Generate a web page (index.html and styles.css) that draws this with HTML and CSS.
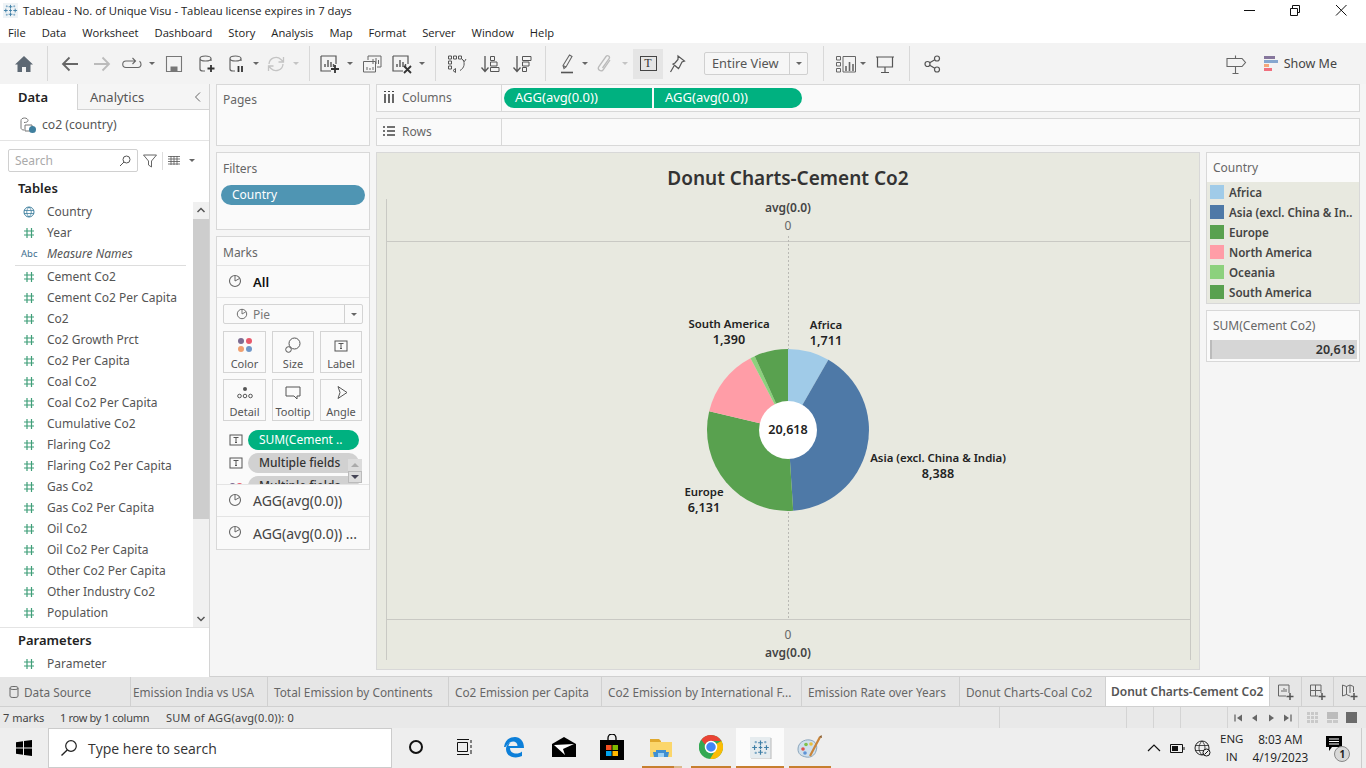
FILE: index.html
```html
<!DOCTYPE html>
<html>
<head>
  <title>Tableau - No. of Unique Visu</title>
  <link rel="stylesheet" href="styles.css">
</head>
<body>
  <svg class="sprite">
    <symbol id="hash" viewBox="0 0 12 12"><path d="M4 1v10M8.500 1v10M1 4h10M1 8h10" stroke="#3f9e78" stroke-width="1.200" fill="none"/></symbol>
    <symbol id="pie" viewBox="0 0 14 14"><circle cx="7" cy="7" r="5.500" fill="none" stroke="#666" stroke-width="1.100"/><path d="M7 7V1.500M7 7l4.500 -2.500" stroke="#666" fill="none"/></symbol>
    <symbol id="tbox" viewBox="0 0 14 14"><rect x="1" y="2" width="12" height="10" fill="none" stroke="#555"/><path d="M4.500 4.500h5M7 4.500v5M6 9.500h2" stroke="#555" fill="none"/></symbol>
    <symbol id="tableau" viewBox="0 0 16 16"><g stroke="#3f7fa6" fill="none"><path d="M8 2v4M6 4h4M8 10v4M6 12h4M3 6v4M1 8h4M13 6v4M11 8h4M8 6.500v3M6.500 8h3" /><path d="M4 2.500v2M3 3.500h2M12 2.500v2M11 3.500h2M4 11.500v2M3 12.500h2M12 11.500v2M11 12.500h2" stroke="#7ba7c4"/></g></symbol>
    <symbol id="db" viewBox="0 0 24 24"><path d="M17 9V6.500C17 5 14.500 4 11.500 4S6 5 6 6.500V17c0 1 1 2 3 2h2M6 6.500C6 8 8.500 9 11.500 9S17 8 17 6.500" fill="none" stroke="#666" stroke-width="1.200"/></symbol>
    <symbol id="sheet" viewBox="0 0 24 24"><path d="M3 4h15v8M13 19H3V4" fill="none" stroke="#555" stroke-width="1.200"/><path d="M7 15v-3M10 15V8M13 15v-5M15.500 15v-3" stroke="#555" stroke-width="1.400"/></symbol>
  </svg>

  <div class="titlebar">
    <svg class="app-logo"><use href="#tableau"/></svg>
    <span class="title-text">Tableau - No. of Unique Visu - Tableau license expires in 7 days</span>
    <div class="win-btns">
      <svg width="46" height="21"><path d="M18 10.500h11" stroke="#111"/></svg>
      <svg width="46" height="21"><path d="M18.500 8.500h7v7h-7zM20.500 8V5.500h7v7H26" stroke="#111" fill="none"/></svg>
      <svg width="46" height="21"><path d="M18 5l10.500 10.500M28.500 5L18 15.500" stroke="#111" fill="none"/></svg>
    </div>
  </div>

  <nav class="menubar">
    <span>File</span><span>Data</span><span>Worksheet</span><span>Dashboard</span><span>Story</span><span>Analysis</span><span>Map</span><span>Format</span><span>Server</span><span>Window</span><span>Help</span>
  </nav>

  <div class="toolbar">
    <div class="tools">
      <svg viewBox="0 0 24 24"><path d="M12 4l9 8.500h-2.500V20H14v-5h-4v5H5.500v-7.500H3z" fill="#5d6873"/></svg>
      <i class="sep"></i>
      <svg viewBox="0 0 24 24"><path d="M20 12H5M11.500 5.500L5 12l6.500 6.500" fill="none" stroke="#666" stroke-width="1.800"/></svg>
      <svg viewBox="0 0 24 24"><path d="M4 12h15M12.500 5.500L19 12l-6.500 6.500" fill="none" stroke="#bbb" stroke-width="1.800"/></svg>
      <svg viewBox="0 0 24 24"><path d="M15 9H6a3 3 0 0 0 0 6.500h12a3 3 0 0 0 3-3.200c0-1.300-.5-2.300-1.500-3M12.500 6l3 3-3 3" fill="none" stroke="#666" stroke-width="1.100"/></svg>
      <b class="caret"></b>
      <svg viewBox="0 0 24 24"><path d="M4.500 4.500h15v15h-15z" fill="none" stroke="#777" stroke-width="1.100"/><path d="M8.500 19.500v-5h7v5zM11 17h3v2.500h-3z" fill="#777"/></svg>
      <svg viewBox="0 0 24 24"><use href="#db"/><path d="M17 13v7M13.500 16.500h7" stroke="#333" stroke-width="1.800"/></svg>
      <svg viewBox="0 0 24 24"><use href="#db"/><path d="M14.500 14v6M18 14v6" stroke="#333" stroke-width="1.800"/></svg>
      <b class="caret"></b>
      <svg viewBox="0 0 24 24"><path d="M5 12a7 7 0 0 1 12-4.500l2 2M19 12a7 7 0 0 1-12 4.500l-2-2M19.500 5v5h-5M4.500 19v-5h5" fill="none" stroke="#c4c4c4" stroke-width="1.300"/></svg>
      <b class="caret off"></b>
      <i class="sep"></i>
      <svg viewBox="0 0 24 24"><use href="#sheet"/><path d="M17 13v8M13 17h8" stroke="#333" stroke-width="1.800"/></svg>
      <b class="caret"></b>
      <svg viewBox="0 0 24 24"><path d="M8 8V4h13v11h-4" fill="none" stroke="#666"/><path d="M3.500 9.500h12V20h-12z" fill="#f4f4f4" stroke="#666"/><path d="M13 7v5M16 6v6M18.500 8v4M7 18v-3M10 18v-2M13 18v-3" stroke="#666"/></svg>
      <svg viewBox="0 0 24 24"><use href="#sheet"/><path d="M14 14l7 7M21 14l-7 7" stroke="#333" stroke-width="1.800"/></svg>
      <b class="caret"></b>
      <i class="sep"></i>
      <svg viewBox="0 0 24 24"><path d="M3.500 4h3v3h-3zM8.500 4h3v3h-3zM13.500 4h3v3h-3zM3.500 9h3v3h-3zM3.500 14h3v3h-3zM18 8c2 3 1.500 8-3 10.500M8 18.500l2.500-2v4zM17 7l2.500 2.500L21 7" fill="none" stroke="#555"/></svg>
      <svg viewBox="0 0 24 24"><path d="M7 4v15M3.500 15.500L7 19.500l3.500-4" fill="none" stroke="#555" stroke-width="1.300"/><path d="M12.500 4.500h4v4h-4zM12.500 10h6.500v4h-6.500zM12.500 15.500H21v4h-8.500z" fill="none" stroke="#555"/></svg>
      <svg viewBox="0 0 24 24"><path d="M7 4v15M3.500 15.500L7 19.500l3.500-4" fill="none" stroke="#555" stroke-width="1.300"/><path d="M12.500 4.500H21v4h-8.500zM12.500 10H19v4h-6.500zM12.500 15.500h4v4h-4z" fill="none" stroke="#555"/></svg>
      <i class="sep"></i>
      <svg viewBox="0 0 24 24"><path d="M9 16.500l-1 -3L14.500 3l2.500 1.500L11 15zM8 13.500l3 1.500" fill="none" stroke="#666" stroke-width="1.100"/><path d="M6 20.500h12" stroke="#555" stroke-width="1.600"/></svg>
      <b class="caret"></b>
      <svg viewBox="0 0 24 24"><path d="M17 8l-7 10a2.700 2.700 0 0 1-4.300-3.200L13 4.500a1.900 1.900 0 0 1 3.100 2.200L9.500 16" fill="none" stroke="#bbb" stroke-width="1.300"/></svg>
      <b class="caret off"></b>
      <span class="tool-on"><span class="t-box">T</span></span>
      <svg viewBox="0 0 24 24"><path d="M13 4l6.500 5-2.500 1-2.500 5-1 1.500-5.500-4.500 2-1 3-3.500zM9 14l-3.500 6" fill="none" stroke="#555" stroke-width="1.200"/></svg>
      <span></span>
      <div class="fit-select"><span class="fit-label">Entire View</span><span class="fit-arrow"><b class="caret"></b></span></div>
      <i class="sep"></i>
      <svg viewBox="0 0 24 24"><path d="M2.500 4.500h4v3.500h-4zM2.500 10.500h4v3.500h-4zM2.500 16.500h4V20h-4zM9 4.500h12.500V20H9z" fill="none" stroke="#666"/><path d="M12 19v-5M15.500 19v-9M19 19v-7" stroke="#666" stroke-width="1.600"/></svg>
      <b class="caret"></b>
      <svg viewBox="0 0 24 24"><path d="M3 5h18M4.500 5v10h15V5M12 15v5M8 20.500h8" fill="none" stroke="#555" stroke-width="1.200"/></svg>
      <i class="sep"></i>
      <svg viewBox="0 0 24 24"><circle cx="17" cy="6.500" r="2.500" fill="none" stroke="#555" stroke-width="1.200"/><circle cx="17" cy="17.500" r="2.500" fill="none" stroke="#555" stroke-width="1.200"/><circle cx="7.500" cy="12" r="2.500" fill="none" stroke="#555" stroke-width="1.200"/><path d="M9.700 10.800l5.100-3M9.700 13.200l5.100 3" stroke="#555" stroke-width="1.200"/></svg>
    </div>
    <div class="tools-right">
      <svg viewBox="0 0 24 24"><path d="M3 6.500h15l3.500 4-3.500 4H3zM11.500 3.500v3M11.500 14.500v7M8.500 21.500h6" fill="none" stroke="#666" stroke-width="1.100"/></svg>
      <div class="showme"><span class="showme-bars"><i></i><i></i><i></i><i></i></span>Show Me</div>
    </div>
  </div>

  <div class="workspace">
    <aside class="side">
      <div class="side-tabs">
        <div class="side-tab active">Data</div>
        <div class="side-tab">Analytics<svg width="10" height="12"><path d="M7 1.500L2.500 6 7 10.500" fill="none" stroke="#666"/></svg></div>
      </div>
      <div class="source">
        <svg width="18" height="18" viewBox="0 0 18 18"><path d="M9 4.500c0-1.400-1.500-2.500-3.500-2.500S2 3.100 2 4.500V12c0 1 1 2 3 2M5 6.500c2 0 4-.5 4-2M6 9h7v6H6z" fill="none" stroke="#777"/><circle cx="13.500" cy="13.500" r="3.500" fill="#3f7f9e"/></svg>
        <span>co2 (country)</span>
      </div>
      <div class="search-row">
        <div class="search-box"><span>Search</span><svg width="12" height="12"><circle cx="7.500" cy="4.500" r="3.500" fill="none" stroke="#555"/><path d="M5 7l-4 4" stroke="#555"/></svg></div>
        <svg width="14" height="14"><path d="M.5 1h13L8.500 7v6l-3-2V7z" fill="none" stroke="#666"/></svg>
        <i class="vline"></i>
        <svg width="12" height="10"><path d="M0 .5h12M0 3h12M0 5.500h12M0 8h12M3 0v9M6 0v9M9 0v9" stroke="#555" stroke-width=".8"/></svg>
        <b class="caret"></b>
      </div>
      <h3 class="side-head">Tables</h3>
      <div class="fields-wrap">
        <div class="fields">
          <div class="field"><svg class="f-icon" viewBox="0 0 12 12"><circle cx="6" cy="6" r="5" fill="none" stroke="#3f7f9e"/><path d="M1 4.500h10M1 7.500h10M6 1c-3 3-3 7 0 10M6 1c3 3 3 7 0 10" fill="none" stroke="#3f7f9e" stroke-width=".8"/></svg>Country</div>
          <div class="field"><svg class="f-icon"><use href="#hash"/></svg>Year</div>
          <div class="field measure"><span class="abc">Abc</span>Measure Names</div>
          <hr class="field-rule">
          <div class="field"><svg class="f-icon"><use href="#hash"/></svg>Cement Co2</div>
          <div class="field"><svg class="f-icon"><use href="#hash"/></svg>Cement Co2 Per Capita</div>
          <div class="field"><svg class="f-icon"><use href="#hash"/></svg>Co2</div>
          <div class="field"><svg class="f-icon"><use href="#hash"/></svg>Co2 Growth Prct</div>
          <div class="field"><svg class="f-icon"><use href="#hash"/></svg>Co2 Per Capita</div>
          <div class="field"><svg class="f-icon"><use href="#hash"/></svg>Coal Co2</div>
          <div class="field"><svg class="f-icon"><use href="#hash"/></svg>Coal Co2 Per Capita</div>
          <div class="field"><svg class="f-icon"><use href="#hash"/></svg>Cumulative Co2</div>
          <div class="field"><svg class="f-icon"><use href="#hash"/></svg>Flaring Co2</div>
          <div class="field"><svg class="f-icon"><use href="#hash"/></svg>Flaring Co2 Per Capita</div>
          <div class="field"><svg class="f-icon"><use href="#hash"/></svg>Gas Co2</div>
          <div class="field"><svg class="f-icon"><use href="#hash"/></svg>Gas Co2 Per Capita</div>
          <div class="field"><svg class="f-icon"><use href="#hash"/></svg>Oil Co2</div>
          <div class="field"><svg class="f-icon"><use href="#hash"/></svg>Oil Co2 Per Capita</div>
          <div class="field"><svg class="f-icon"><use href="#hash"/></svg>Other Co2 Per Capita</div>
          <div class="field"><svg class="f-icon"><use href="#hash"/></svg>Other Industry Co2</div>
          <div class="field"><svg class="f-icon"><use href="#hash"/></svg>Population</div>
        </div>
        <div class="scroll">
          <svg width="16" height="17"><path d="M4.500 10L8 6.500l3.500 3.500" fill="none" stroke="#555" stroke-width="1.500"/></svg>
          <div class="scroll-track"><div class="scroll-thumb"></div></div>
          <svg width="16" height="17"><path d="M4.500 7L8 10.500 11.500 7" fill="none" stroke="#555" stroke-width="1.500"/></svg>
        </div>
      </div>
      <div class="params">
        <h3 class="side-head">Parameters</h3>
        <div class="field"><svg class="f-icon"><use href="#hash"/></svg>Parameter</div>
      </div>
    </aside>

    <div class="cards">
      <section class="card pages"><div class="card-title">Pages</div></section>
      <section class="card filters">
        <div class="card-title">Filters</div>
        <div class="filter-pill">Country</div>
      </section>
      <section class="card marks">
        <div class="card-title marks-title">Marks</div>
        <div class="mark-row all"><svg class="m-icon"><use href="#pie"/></svg>All</div>
        <div class="marks-body">
          <div class="mark-select"><svg class="s-icon"><use href="#pie"/></svg><span class="mark-type">Pie</span><span class="fit-arrow"><b class="caret"></b></span></div>
          <div class="mark-btns">
            <div class="mark-btn"><svg width="16" height="16"><circle cx="4" cy="4" r="3" fill="#7d6b91"/><circle cx="12" cy="4" r="3" fill="#e8596b"/><circle cx="4" cy="12" r="3" fill="#f0a070"/><circle cx="12" cy="12" r="3" fill="#6f97c9"/></svg>Color</div>
            <div class="mark-btn"><svg width="16" height="16"><circle cx="9.500" cy="6.500" r="5.500" fill="#fafafa" stroke="#555"/><circle cx="3.500" cy="12.500" r="2.800" fill="#fafafa" stroke="#555"/></svg>Size</div>
            <div class="mark-btn"><svg width="14" height="14"><use href="#tbox"/></svg>Label</div>
            <div class="mark-btn"><svg width="16" height="16"><circle cx="8" cy="4" r="2" fill="#555"/><circle cx="2.500" cy="11" r="1.800" fill="none" stroke="#555"/><circle cx="8" cy="11" r="1.800" fill="none" stroke="#555"/><circle cx="13.500" cy="11" r="1.800" fill="none" stroke="#555"/></svg>Detail</div>
            <div class="mark-btn"><svg width="16" height="16"><path d="M1 2h14v9h-3v3l-3-3H1z" fill="none" stroke="#555"/></svg>Tooltip</div>
            <div class="mark-btn"><svg width="16" height="16"><path d="M5 1.500l9 6-9 6 2-6z" fill="none" stroke="#555"/></svg>Angle</div>
          </div>
          <div class="encodings">
            <div class="enc"><svg class="e-icon"><use href="#tbox"/></svg><span class="pill green">SUM(Cement ..</span></div>
            <div class="enc"><svg class="e-icon"><use href="#tbox"/></svg><span class="pill grey">Multiple fields</span></div>
            <div class="enc"><svg class="e-icon" viewBox="0 0 14 14"><circle cx="3.500" cy="7" r="3" fill="#7d6b91"/><circle cx="10.500" cy="7" r="3" fill="#e8596b"/></svg><span class="pill grey">Multiple fields</span></div>
            <div class="enc-scroll">
              <span class="enc-up"><svg width="14" height="12"><path d="M3 8l4-4 4 4z" fill="#aaa"/></svg></span>
              <span class="enc-down"><svg width="12" height="10"><path d="M2 3l4 4 4-4z" fill="#445"/></svg></span>
            </div>
          </div>
        </div>
        <div class="mark-row agg"><svg class="m-icon"><use href="#pie"/></svg>AGG(avg(0.0))</div>
        <div class="mark-row agg"><svg class="m-icon"><use href="#pie"/></svg>AGG(avg(0.0)) ...</div>
      </section>
    </div>

    <div class="stage">
      <div class="shelf">
        <div class="shelf-label"><svg width="12" height="12"><path d="M2 3v9M6 3v9M10 3v9" stroke="#444" stroke-width="1.600"/><path d="M1 .5h2M5 .5h2M9 .5h2" stroke="#444"/></svg>Columns</div>
        <div class="shelf-pills"><span class="shelf-pill first">AGG(avg(0.0))</span><span class="shelf-pill last">AGG(avg(0.0))</span></div>
      </div>
      <div class="shelf">
        <div class="shelf-label"><svg width="12" height="12"><path d="M0 2h2M4 2h8M0 6h2M4 6h8M0 10h2M4 10h8" stroke="#444" stroke-width="1.400"/></svg>Rows</div>
        <div class="shelf-pills"></div>
      </div>
      <div class="view-row">
        <div class="viz">
          <h2 class="viz-title">Donut Charts-Cement Co2</h2>
          <svg class="chart" width="822" height="472" viewBox="377 197 822 472">
            <path d="M386.500 199V660M1190.500 199V660M387 241.500H1190M387 619.500H1190" stroke="#c9c9c4" fill="none"/>
            <path d="M788.500 236V619" stroke="#b9b9b4" stroke-dasharray="2 2" fill="none"/>
            <text class="axis-name" x="788" y="212">avg(0.0)</text>
            <text class="axis-tick" x="788" y="230">0</text>
            <text class="axis-tick" x="788" y="639">0</text>
            <text class="axis-name" x="788" y="657">avg(0.0)</text>
            <g transform="translate(788 430)">
              <path d="M0 0V-81A81 81 0 0 1 40.340 -70.240Z" fill="#a0cbe8"/>
              <path d="M0 0L40.340 -70.240A81 81 0 0 1 5.180 80.830Z" fill="#4e79a7"/>
              <path d="M0 0L5.180 80.830A81 81 0 0 1 -78.810 -18.740Z" fill="#59a14f"/>
              <path d="M0 0L-78.810 -18.740A81 81 0 0 1 -37.530 -71.780Z" fill="#ff9da7"/>
              <path d="M0 0L-37.530 -71.780A81 81 0 0 1 -33.300 -73.840Z" fill="#8cd17d"/>
              <path d="M0 0L-33.300 -73.840A81 81 0 0 1 0 -81Z" fill="#59a14f"/>
              <circle r="29" fill="#fff"/>
            </g>
            <text class="mark-value" x="788" y="434">20,618</text>
            <text class="mark-label" x="729" y="328">South America</text>
            <text class="mark-value" x="729" y="344">1,390</text>
            <text class="mark-label" x="826" y="329">Africa</text>
            <text class="mark-value" x="826" y="345">1,711</text>
            <text class="mark-label" x="938" y="462">Asia (excl. China &amp; India)</text>
            <text class="mark-value" x="938" y="478">8,388</text>
            <text class="mark-label" x="704" y="496">Europe</text>
            <text class="mark-value" x="704" y="512">6,131</text>
          </svg>
        </div>
        <div class="legends">
          <section class="legend">
            <div class="legend-title">Country</div>
            <ul class="legend-list">
              <li><i class="swatch africa"></i>Africa</li>
              <li><i class="swatch asia"></i>Asia (excl. China &amp; In..</li>
              <li><i class="swatch europe"></i>Europe</li>
              <li><i class="swatch namerica"></i>North America</li>
              <li><i class="swatch oceania"></i>Oceania</li>
              <li><i class="swatch europe"></i>South America</li>
            </ul>
          </section>
          <section class="legend">
            <div class="legend-title">SUM(Cement Co2)</div>
            <div class="size-bar">20,618</div>
          </section>
        </div>
      </div>
    </div>
  </div>

  <div class="sheet-tabs">
    <div class="sheet-tab source-tab"><svg width="12" height="14" viewBox="0 0 12 14"><path d="M2 3v8c0 1 1 1.500 4 1.500s4-.5 4-1.500V3c0-1-1-1.500-4-1.500S2 2 2 3c0 1 1 1.500 4 1.500S10 4 10 3" fill="none" stroke="#666"/></svg>Data Source</div>
    <div class="sheet-tab tight">Emission India vs USA</div>
    <div class="sheet-tab">Total Emission by Continents</div>
    <div class="sheet-tab">Co2 Emission per Capita</div>
    <div class="sheet-tab">Co2 Emission by International F...</div>
    <div class="sheet-tab">Emission Rate over Years</div>
    <div class="sheet-tab">Donut Charts-Coal Co2</div>
    <div class="sheet-tab current">Donut Charts-Cement Co2</div>
    <div class="sheet-tab add"><svg width="18" height="18"><path d="M9 13H1.500V2H12v8" fill="none" stroke="#666"/><path d="M5 9V7M7 9V5M9 9V6" stroke="#666"/><path d="M13 10v7M9.500 13.500h7" stroke="#555" stroke-width="1.500"/></svg></div>
    <div class="sheet-tab add"><svg width="18" height="18"><path d="M9 13H1.500V2H12v8M1.500 7.500H12M6.500 2v11" fill="none" stroke="#666"/><path d="M13 10v7M9.500 13.500h7" stroke="#555" stroke-width="1.500"/></svg></div>
    <div class="sheet-tab add"><svg width="18" height="18"><path d="M9 13l-3.500-1.500L1.500 13V2l4 1.500L9 2l3.500 1.500V9M5.500 3.500v8M9 2v8" fill="none" stroke="#666"/><path d="M13 10v7M9.500 13.500h7" stroke="#555" stroke-width="1.500"/></svg></div>
  </div>

  <div class="statusbar">
    <span class="st-marks">7 marks</span>
    <span class="st-rows">1 row by 1 column</span>
    <span class="st-sum">SUM of AGG(avg(0.0)): 0</span>
    <div class="st-cells"><i></i><i></i><i></i><i></i></div>
    <div class="st-nav">
      <svg width="13" height="10"><path d="M3 1.500v7" stroke="#666" stroke-width="1.300"/><path d="M10 1.500L5 5l5 3.500z" fill="#666"/></svg>
      <svg width="13" height="10"><path d="M9 1.500L4 5l5 3.500z" fill="#666"/></svg>
      <svg width="13" height="10"><path d="M4 1.500L9 5 4 8.500z" fill="#666"/></svg>
      <svg width="13" height="10"><path d="M10 1.500v7" stroke="#666" stroke-width="1.300"/><path d="M3 1.500L8 5 3 8.500z" fill="#666"/></svg>
    </div>
    <div class="st-views">
      <svg width="12" height="11"><path d="M0 0h3v3H0zM4 0h3v3H4zM8 0h3v3H8zM0 4h3v3H0zM4 4h3v3H4zM8 4h3v3H8zM0 8h3v3H0zM4 8h3v3H4zM8 8h3v3H8z" fill="#c9c9c9"/></svg>
      <svg width="12" height="11"><path d="M0 0h11v7H0z" fill="#bcbcbc"/><path d="M0 8h5v3H0zM6 8h5v3H6z" fill="#c9c9c9"/></svg>
      <svg width="12" height="11"><path d="M0 0h11v11H0z" fill="#6b6b6b"/></svg>
    </div>
  </div>

  <footer class="taskbar">
    <svg class="win-logo" width="16" height="16"><path d="M0 2.200L7 1.200V7.500H0zM8 1L16 0v7.500H8zM0 8.500h7v6.300L0 13.800zM8 8.500h8V16l-8-1.100z" fill="#000"/></svg>
    <div class="task-search">
      <svg width="18" height="18"><circle cx="11" cy="7" r="5.300" fill="none" stroke="#222" stroke-width="1.200"/><path d="M7.200 11L1.500 16.500" stroke="#222" stroke-width="1.400"/></svg>
      <span>Type here to search</span>
    </div>
    <div class="task-apps">
      <span class="app"><svg width="16" height="16"><circle cx="8" cy="8" r="6" fill="none" stroke="#111" stroke-width="2"/></svg></span>
      <span class="app"><svg width="18" height="16"><path d="M2 .5h12M2 15.500h12M2.500 3.500h10v9h-10zM16 1v3M16 6v3M16 11v4" fill="none" stroke="#111"/></svg></span>
      <span class="app"><svg width="22" height="22" viewBox="0 0 22 22"><path d="M1 11C2 4 7 1 12 1c5 0 9 4 9 11H7c0 6 8 7 12 3.500v4.500c-6 3-16 1.500-16-7 0-3 2-6 5-6.500-2 1-2.500 2.500-2.500 3.500h9c0-5-7-7-12 1z" fill="#0c7fd9"/></svg></span>
      <span class="app"><svg width="24" height="20"><path d="M0 7L12 0l12 7v13H0z" fill="#000"/><path d="M2 8l20-1-11 5 2 6z" fill="#fff"/></svg></span>
      <span class="app"><svg width="24" height="26"><path d="M8 7V4a4 4 0 0 1 8 0v3" fill="none" stroke="#000" stroke-width="1.300"/><path d="M0 6h24v20H0z" fill="#000"/><path d="M6 11h5.500v5H6z" fill="#f25022"/><path d="M12.500 11H18v5h-5.500z" fill="#7fba00"/><path d="M6 17h5.500v5H6z" fill="#00a4ef"/><path d="M12.500 17H18v5h-5.500z" fill="#ffb900"/></svg></span>
      <span class="app running folder"><svg width="22" height="19"><path d="M0 1h9l2 2v3H0z" fill="#e0a92e"/><path d="M0 4h22v15H0z" fill="#fbd66b"/><path d="M6 12h10v2h3l-1 5H4l-1-5h3z" fill="#3f8fd2"/><path d="M8 15h6v4H8z" fill="#9bd0f5"/></svg></span>
      <span class="app running"><svg width="24" height="24" viewBox="0 0 24 24"><circle cx="12" cy="12" r="12" fill="#34a853"/><path d="M12 0a12 12 0 0 1 10.400 6H12a6 6 0 0 0-5.700 4L2.200 5A12 12 0 0 1 12 0z" fill="#ea4335"/><path d="M22.400 6A12 12 0 0 1 11 24l5.200-8.500A6 6 0 0 0 17 9z" fill="#fbbc05"/><path d="M2.200 5L6.300 10a6 6 0 0 0 3 7L6 22.400A12 12 0 0 1 2.200 5z" fill="#34a853"/><circle cx="12" cy="12" r="5.500" fill="#4285f4" stroke="#fff" stroke-width="1.500"/></svg></span>
      <span class="app running active"><svg width="24" height="24"><path d="M2 2h21v21H2z" fill="#e6ecef"/><path d="M23 3v21H3" fill="none" stroke="#b9b9b9"/><use href="#tableau" x="3" y="3" width="19" height="19"/></svg></span>
      <span class="app running"><svg width="26" height="26" viewBox="0 0 26 26"><path d="M1 15c0-6 6-10 12-9 6 1 8 6 6 11-1 4-5 7-10 6-5-1-8-3-8-8z" fill="#cfdfec" stroke="#8aa5bb"/><circle cx="6" cy="15" r="1.800" fill="#e0524e"/><circle cx="9" cy="10.500" r="1.800" fill="#7fc04b"/><circle cx="14" cy="10" r="1.800" fill="#e8c03c"/><circle cx="8" cy="19" r="1.800" fill="#5d93d6"/><path d="M13 22L23 3" stroke="#c9853a" stroke-width="2.200"/><path d="M22 3l2.500-2 .5 3z" fill="#8a5a2a"/></svg></span>
    </div>
    <div class="tray">
      <svg width="14" height="8"><path d="M1 7l6-6 6 6" fill="none" stroke="#111" stroke-width="1.200"/></svg>
      <svg width="15" height="9"><path d="M.5 .5h12v8H.5z" fill="none" stroke="#111"/><path d="M2 2h6v5H2z" fill="#111"/><path d="M14 3v3" stroke="#111"/></svg>
      <svg width="17" height="17"><circle cx="8" cy="8" r="7" fill="none" stroke="#222"/><path d="M1 5.500h14M1 10.500h14M8 1c-4 4-4 10 0 14M8 1c4 4 4 10 0 14" fill="none" stroke="#222" stroke-width=".8"/><circle cx="12.500" cy="12.500" r="3.500" fill="#eee" stroke="#111"/><path d="M10.500 14.500l4-4" stroke="#111"/></svg>
      <div class="lang">ENG<br>IN</div>
      <div class="clock">8:03 AM<br>4/19/2023</div>
      <div class="notif">
        <svg width="17" height="16"><path d="M0 0h16v11H6l-3 4v-4H0z" fill="#000"/><path d="M3 3h10M3 5.500h10M3 8h10" stroke="#fff"/></svg>
        <span class="notif-badge">1</span>
      </div>
    </div>
    <div class="desktop-edge"></div>
  </footer>
</body>
</html>
```

FILE: styles.css
```css
* { box-sizing: border-box; }

body {
  margin: 0;
  width: 1366px;
  height: 768px;
  overflow: hidden;
  font-family: "Noto Sans", Arial, sans-serif;
  font-size: 12px;
  color: #555;
  background-color: #f5f5f5;
}

.sprite {
  position: absolute;
  width: 0;
  height: 0;
}

/* window title + menu */
.titlebar {
  height: 21px;
  display: flex;
  align-items: center;
  padding-left: 3px;
  background-color: #fff;
  color: #222;
  font-family: "Open Sans", Arial, sans-serif;
  font-size: 11.25px;
}
.app-logo {
  width: 15px;
  height: 15px;
  margin-right: 5px;
  background-color: #eef3f6;
}
.win-btns {
  margin-left: auto;
  display: flex;
  padding-right: 2px;
}
.menubar {
  height: 22px;
  display: flex;
  align-items: center;
  gap: 16px;
  padding-left: 8px;
  background-color: #fff;
  color: #222;
  font-family: "Open Sans", Arial, sans-serif;
  font-size: 11.2px;
}

/* toolbar */
.toolbar {
  height: 41px;
  display: flex;
  justify-content: space-between;
  padding-left: 8px;
  background-color: #f3f3f3;
}
.tools {
  display: grid;
  grid-template-columns: 32px 14px 32px 32px 28px 12px 32px 32px 28px 12px 28px 12px 14px 28px 12px 32px 28px 12px 14px 30px 36px 28px 18px 26px 10px 30px 10px 36px 22px 16px 104px 30px 16px 18px 26px 22px 24px;
  align-items: center;
  justify-items: center;
}
.tools svg {
  width: 24px;
  height: 24px;
}
.sep {
  width: 1px;
  height: 35px;
  background-color: #d8d8d8;
}
.caret {
  display: block;
  width: 0;
  height: 0;
  border-left: 3px solid transparent;
  border-right: 3px solid transparent;
  border-top: 3px solid #666;
}
.caret.off { border-top-color: #c4c4c4; }
.tool-on {
  width: 30px;
  height: 30px;
  display: flex;
  align-items: center;
  justify-content: center;
  background-color: #e5e5e5;
}
.t-box {
  width: 17px;
  height: 15px;
  border: 1px solid #444;
  font-family: "Liberation Serif", serif;
  font-size: 12px;
  line-height: 13px;
  text-align: center;
  color: #333;
}
.fit-select {
  width: 104px;
  height: 23px;
  display: flex;
  background-color: #f6f6f6;
  border: 1px solid #d0d0d0;
  border-radius: 2px;
}
.fit-label {
  flex: 1;
  padding-left: 7px;
  line-height: 20px;
  font-size: 12.8px;
}
.fit-arrow {
  width: 18px;
  display: flex;
  align-items: center;
  justify-content: center;
  border-left: 1px solid #d0d0d0;
}
.tools-right {
  display: flex;
  align-items: center;
  padding-right: 29px;
}
.tools-right svg {
  width: 24px;
  height: 24px;
}
.showme {
  display: flex;
  align-items: center;
  gap: 6px;
  margin-left: 16px;
  font-size: 12.5px;
  color: #444;
}
.showme-bars {
  width: 14px;
  display: flex;
  flex-direction: column;
  gap: 1px;
}
.showme-bars i { display: block; height: 3px; }
.showme-bars i:nth-child(1) { width: 11px; background-color: #86769c; }
.showme-bars i:nth-child(2) { width: 14px; background-color: #86a7cf; }
.showme-bars i:nth-child(3) { width: 5px; background-color: #f4a77a; }
.showme-bars i:nth-child(4) { width: 8px; background-color: #f0707e; }

/* main area */
.workspace {
  height: 593px;
  display: grid;
  grid-template-columns: 210px 160px 1fr;
}
.side {
  background-color: #fff;
  border-right: 1px solid #d4d4d4;
  display: flex;
  flex-direction: column;
}
.side-tabs {
  height: 26px;
  display: flex;
}
.side-tab {
  display: flex;
  align-items: center;
  font-size: 13px;
  padding-left: 18px;
}
.side-tab.active {
  width: 77px;
  color: #222;
  font-weight: 600;
}
.side-tab:not(.active) {
  flex: 1;
  padding-left: 12px;
  justify-content: space-between;
  padding-right: 6px;
  background-color: #f5f5f5;
  border-left: 1px solid #d4d4d4;
  border-bottom: 1px solid #d4d4d4;
}
.source {
  height: 31px;
  display: flex;
  align-items: center;
  gap: 5px;
  padding: 0 0 1px 19px;
  border-bottom: 1px solid #e4e4e4;
  font-size: 12.2px;
}
.search-row {
  height: 31px;
  padding: 8px 0 0 8px;
  display: flex;
  align-items: center;
  gap: 5px;
}
.search-box {
  width: 130px;
  height: 23px;
  border: 1px solid #d0d0d0;
  border-radius: 2px;
  padding: 0 6px;
  display: flex;
  align-items: center;
  justify-content: space-between;
  color: #aaa;
}
.vline {
  width: 1px;
  height: 18px;
  background-color: #ddd;
}
.search-row .caret { margin-left: 4px; }
.side-head {
  margin: 0;
  padding-left: 18px;
  font-size: 13px;
  font-weight: 600;
  color: #222;
}
.side > .side-head {
  height: 30px;
  line-height: 30px;
  padding-top: 1px;
}
.fields-wrap {
  height: 426px;
  flex: none;
  display: flex;
  border-bottom: 1px solid #e4e4e4;
}
.fields {
  flex: 1;
  overflow: hidden;
  padding-right: 7px;
}
.field {
  height: 21px;
  display: flex;
  align-items: center;
  color: #555;
  padding-left: 47px;
  position: relative;
}
.fields .field:first-child { margin-top: -1px; }
.f-icon {
  position: absolute;
  left: 23px;
  top: 5px;
  width: 12px;
  height: 12px;
}
.field.measure { font-style: italic; }
.abc {
  position: absolute;
  left: 21px;
  font-style: normal;
  font-size: 9.5px;
  color: #3f6f8f;
}
.field-rule {
  height: 1px;
  margin: 1px 0 0 15px;
  border: 0;
  background-color: #ddd;
}
.scroll {
  width: 16px;
  display: flex;
  flex-direction: column;
  background-color: #f0f0f0;
}
.scroll-track { flex: 1; }
.scroll-thumb {
  height: 300px;
  background-color: #cdcdcd;
}
.params { padding-top: 1px; }
.params .side-head {
  height: 24px;
  line-height: 22px;
}

.cards {
  padding-left: 6px;
  display: flex;
  flex-direction: column;
  gap: 6px;
}
.card {
  background-color: #fafafa;
  border: 1px solid #d8d8d8;
}
.card-title {
  padding: 6px 6px 0;
  color: #666;
}
.filters .card-title { padding-top: 7px; }
.pages { height: 62px; }
.filters { height: 78px; }
.filter-pill {
  height: 20px;
  margin: 8px 4px 0;
  padding-left: 11px;
  line-height: 20px;
  border-radius: 10px;
  background-color: #4f95b3;
  color: #fff;
}
.marks { height: 314px; }
.card-title.marks-title {
  height: 29px;
  padding-top: 7px;
  border-bottom: 1px solid #e4e4e4;
}
.mark-row {
  height: 32px;
  display: flex;
  align-items: center;
  padding-left: 36px;
  position: relative;
  border-bottom: 1px solid #e4e4e4;
  font-size: 13px;
  color: #444;
}
.mark-row.agg { font-size: 14px; }
.mark-row:last-child { border-bottom: 0; }
.mark-row.all {
  font-weight: 600;
  color: #111;
}
.m-icon {
  position: absolute;
  left: 11px;
  top: 8px;
  width: 14px;
  height: 14px;
}
.marks-body {
  height: 187px;
  padding: 6px 6px 0;
  border-bottom: 1px solid #e4e4e4;
  overflow: hidden;
  position: relative;
}
.mark-select {
  height: 20px;
  display: flex;
  align-items: center;
  padding-left: 12px;
  gap: 5px;
  border: 1px solid #d4d4d4;
  border-radius: 2px;
  color: #777;
}
.s-icon {
  width: 12px;
  height: 12px;
}
.mark-type { flex: 1; }
.mark-select .fit-arrow { height: 100%; }
.mark-btns {
  margin-top: 7px;
  display: grid;
  grid-template-columns: 43px 42px 42px;
  gap: 6px;
}
.mark-btn {
  height: 42px;
  display: flex;
  flex-direction: column;
  align-items: center;
  justify-content: flex-end;
  gap: 3px;
  padding-bottom: 1px;
  border: 1px solid #d4d4d4;
  background-color: #fafafa;
  font-size: 11px;
  color: #555;
}
.encodings {
  position: relative;
  margin-top: 9px;
  display: flex;
  flex-direction: column;
  gap: 3px;
}
.enc {
  height: 20px;
  display: flex;
  align-items: center;
  gap: 5px;
  padding-left: 6px;
}
.e-icon {
  width: 14px;
  height: 14px;
}
.pill {
  flex: 0 0 111px;
  height: 20px;
  padding-left: 11px;
  border-radius: 10px;
  line-height: 19px;
}
.pill.green {
  background-color: #00b180;
  color: #fff;
}
.pill.grey {
  background-color: #d1d1d1;
  color: #333;
  font-weight: 500;
}
.enc-scroll {
  position: absolute;
  right: 1px;
  top: 29px;
  width: 14px;
  display: flex;
  flex-direction: column;
}
.enc-scroll span {
  height: 12px;
  line-height: 0;
  background-color: #dcdcdc;
}
.enc-scroll .enc-down { border: 1px solid #bbb; }

/* shelves + view */
.stage {
  padding: 0 6px;
  display: flex;
  flex-direction: column;
  gap: 6px;
}
.shelf {
  height: 28px;
  display: flex;
  background-color: #fafafa;
  border: 1px solid #d8d8d8;
}
.shelf-label {
  width: 125px;
  display: flex;
  align-items: center;
  gap: 7px;
  padding: 0 0 2px 6px;
  border-right: 1px solid #d8d8d8;
  color: #666;
}
.shelf-pills {
  flex: 1;
  display: flex;
  align-items: center;
  gap: 2px;
  padding-left: 2px;
}
.shelf-pill {
  width: 148px;
  height: 20px;
  padding-left: 11px;
  font-size: 13px;
  line-height: 19px;
  background-color: #00b180;
  color: #fff;
}
.shelf-pill.first { border-radius: 10px 0 0 10px; }
.shelf-pill.last { border-radius: 0 10px 10px 0; }
.view-row {
  flex: 1;
  display: flex;
  gap: 6px;
  padding-bottom: 7px;
}
.viz {
  width: 824px;
  background-color: #e8e9e0;
  border: 1px solid #d8d8d8;
}
.viz-title {
  height: 44px;
  margin: 0;
  padding-top: 12px;
  text-align: center;
  font-size: 19px;
  font-weight: 600;
  line-height: 26px;
  color: #333;
}
.chart {
  display: block;
  font-family: "Noto Sans", Arial, sans-serif;
  text-anchor: middle;
}
.axis-name {
  font-size: 12px;
  font-weight: 600;
  fill: #444;
}
.axis-tick {
  font-size: 12px;
  fill: #666;
}
.mark-label {
  font-size: 11.4px;
  font-weight: 600;
  fill: #222;
}
.mark-value {
  font-size: 12.6px;
  font-weight: 600;
  fill: #222;
}
.legends {
  width: 154px;
  display: flex;
  flex-direction: column;
  gap: 6px;
}
.legend {
  background-color: #fafafa;
  border: 1px solid #d8d8d8;
}
.legend-title {
  height: 29px;
  padding: 6px 6px 0;
  color: #666;
}
.legend-list {
  margin: 0;
  padding: 0 0 1px 3px;
  list-style: none;
  background-color: #e8e9e0;
}
.legend-list li {
  height: 20px;
  display: flex;
  align-items: center;
  gap: 5px;
  font-size: 11.6px;
  font-weight: 600;
  color: #444;
  white-space: nowrap;
}
.swatch {
  flex: 0 0 14px;
  height: 14px;
}
.swatch.africa { background-color: #a0cbe8; }
.swatch.asia { background-color: #4e79a7; }
.swatch.europe { background-color: #59a14f; }
.swatch.namerica { background-color: #ff9da7; }
.swatch.oceania { background-color: #8cd17d; }
.size-bar {
  height: 19px;
  margin: 0 2px 2px 3px;
  padding-right: 2px;
  text-align: right;
  font-size: 12.5px;
  line-height: 19px;
  font-weight: 600;
  color: #333;
  background-color: #d6d6d6;
  border-left: 2px solid #bbb;
}

/* sheet tabs */
.sheet-tabs {
  height: 31px;
  display: grid;
  grid-template-columns: 131px 137px 181px 153px 200px 158px 146px 164px 32px 32px 32px;
  background-color: #e6e6e6;
  border-top: 1px solid #d0d0d0;
  border-bottom: 1px solid #d0d0d0;
  margin-top: -1px;
}
.sheet-tab {
  display: flex;
  align-items: center;
  padding: 1px 0 0 6px;
  border-right: 1px solid #d0d0d0;
  color: #666;
  font-size: 11.8px;
  white-space: nowrap;
  overflow: hidden;
}
.sheet-tab.tight { padding-left: 2px; }
.sheet-tab.add {
  justify-content: center;
  padding-left: 0;
}
.sheet-tab:last-child { border-right: 0; }
.source-tab {
  gap: 4px;
  padding-left: 8px;
}
.sheet-tab.current {
  background-color: #fff;
  padding: 0 0 0 5px;
  font-size: 12px;
  font-weight: 600;
  color: #555;
}

/* status */
.statusbar {
  height: 21px;
  display: flex;
  align-items: center;
  background-color: #e9e9e9;
  font-size: 11px;
  color: #444;
}
.st-marks { width: 60px; padding-left: 3px; }
.st-rows { width: 106px; letter-spacing: -0.3px; }
.st-sum { width: 833px; letter-spacing: 0.25px; }
.st-cells {
  width: 228px;
  height: 100%;
  display: grid;
  grid-template-columns: 127px 27px 27px 47px;
}
.st-cells i { border-left: 1px solid #d4d4d4; }
.st-nav {
  width: 72px;
  height: 100%;
  display: flex;
  align-items: center;
  justify-content: space-evenly;
  border-left: 1px solid #d4d4d4;
  border-right: 1px solid #d4d4d4;
}
.st-views {
  flex: 1;
  display: flex;
  align-items: center;
  justify-content: space-evenly;
}

/* windows taskbar */
.taskbar {
  height: 40px;
  display: flex;
  align-items: center;
  background-color: #eeeeee;
  font-family: "Open Sans", Arial, sans-serif;
  color: #222;
}
.win-logo { margin: 0 16px; }
.task-search {
  width: 344px;
  height: 40px;
  display: flex;
  align-items: center;
  gap: 10px;
  padding-left: 11px;
  background-color: #fff;
  border: 1px solid #ccc;
  font-size: 14px;
  color: #333;
}
.task-apps {
  display: grid;
  grid-template-columns: 48px 48px 52px 48px 48px 50px 50px 48px 52px;
  height: 100%;
}
.app {
  position: relative;
  display: flex;
  align-items: center;
  justify-content: center;
  padding-bottom: 2px;
}
.app.active { background-color: #fbfbfb; }
.app.running::after {
  content: "";
  position: absolute;
  left: 5px;
  right: 5px;
  bottom: 0;
  height: 2px;
  background-color: #c77f2f;
}
.app.active::after {
  left: 0;
  right: 0;
}
.app.folder::after {
  left: 6px;
  right: 4px;
  background: linear-gradient(90deg, #c77f2f 32px, #dcb98c 32px);
}
.tray {
  flex: 1;
  height: 100%;
  display: flex;
  align-items: center;
  padding-left: 311px;
  gap: 9px;
}
.lang {
  font-size: 11.5px;
  line-height: 18px;
  text-align: center;
}
.clock {
  font-size: 11.8px;
  line-height: 18px;
  text-align: center;
}
.notif {
  position: relative;
  margin-left: 9px;
  width: 24px;
  height: 24px;
}
.notif-badge {
  position: absolute;
  right: 0;
  bottom: -2px;
  width: 16px;
  height: 16px;
  border-radius: 50%;
  border: 1px solid #888;
  background-color: #d8d8d8;
  font-size: 10px;
  font-weight: 700;
  line-height: 14px;
  text-align: center;
}
.desktop-edge {
  width: 5px;
  height: 100%;
  border-left: 1px solid #ccc;
}
```
